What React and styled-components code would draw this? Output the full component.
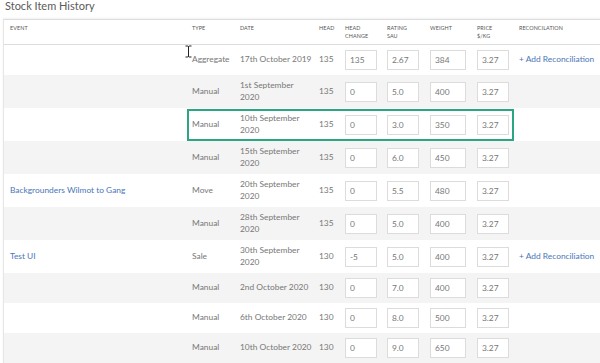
import React from "react";
import styled, { createGlobalStyle } from "styled-components";

const GlobalStyle = createGlobalStyle`
  html, body {
    margin: 0;
    padding: 0;
    background: #ffffff;
    overflow: hidden;
  }
  body {
    font-family: "Lato", "Open Sans", sans-serif;
  }
`;

const StyledPage = styled.div`
  width: 600px;
  height: 363px;
  overflow: hidden;
  position: relative;
`;

const StyledTitle = styled.h2`
  margin: 0;
  padding: 0 0 0 5px;
  height: 19px;
  font-size: 11px;
  font-weight: 400;
  line-height: 12px;
  color: #5a5a5a;
`;

const StyledPanel = styled.div`
  margin-left: 3px;
  width: 640px;
  border-top: 1px solid #ddd;
  border-left: 1px solid #e6e6e6;
  box-shadow: 0 -1px 2px rgba(0, 0, 0, 0.06);
`;

const StyledTable = styled.table`
  border-collapse: collapse;
  table-layout: fixed;
  width: 640px;
`;

const StyledHead = styled.th`
  text-align: left;
  vertical-align: top;
  font-size: 5.4px;
  font-weight: 400;
  letter-spacing: 0.1px;
  line-height: 8px;
  color: #555;
  text-transform: uppercase;
  padding: 4px 0 0 ${(p) => (p.$first ? "6px" : "0")};
  height: 20px;
  border-bottom: 1px solid #dcdcdc;
`;

const StyledRow = styled.tr`
  background: ${(p) => (p.$shaded ? "#f4f4f4" : "#ffffff")};
`;

const StyledCell = styled.td`
  position: relative;
  padding: 5px 0 5px ${(p) => (p.$first ? "6px" : "0")};
  font-size: 8.4px;
  font-weight: 400;
  line-height: 11.5px;
  color: #777;
  vertical-align: middle;
`;

const StyledDate = styled.div`
  width: 73px;
`;

const StyledLink = styled.a`
  color: #4a76b8;
  text-decoration: none;
  cursor: pointer;
`;

const StyledInput = styled.input`
  box-sizing: border-box;
  width: ${(p) => p.$w}px;
  height: 20px;
  border: 1px solid #dcdcdc;
  background: #fff;
  padding: 0 0 0 4px;
  font-family: inherit;
  font-weight: 400;
  font-size: 8.4px;
  color: #777;
  display: block;
`;

const StyledHighlight = styled.div`
  position: absolute;
  left: -5px;
  top: 1px;
  width: 327px;
  height: 32px;
  box-sizing: border-box;
  border: 2px solid #2ba680;
  pointer-events: none;
`;

const StyledCursor = styled.svg`
  position: absolute;
  left: 184px;
  top: 45px;
`;

const rows = [
  { event: "", type: "Aggregate", date: "17th October 2019", head: 135, hc: "135", sau: "2.67", wt: "384", price: "3.27", rec: true },
  { event: "", type: "Manual", date: "1st September 2020", head: 135, hc: "0", sau: "5.0", wt: "400", price: "3.27" },
  { event: "", type: "Manual", date: "10th September 2020", head: 135, hc: "0", sau: "3.0", wt: "350", price: "3.27", hl: true },
  { event: "", type: "Manual", date: "15th September 2020", head: 135, hc: "0", sau: "6.0", wt: "450", price: "3.27" },
  { event: "Backgrounders Wilmot to Gang", type: "Move", date: "20th September 2020", head: 135, hc: "0", sau: "5.5", wt: "480", price: "3.27" },
  { event: "", type: "Manual", date: "28th September 2020", head: 135, hc: "0", sau: "5.0", wt: "400", price: "3.27" },
  { event: "Test UI", type: "Sale", date: "30th September 2020", head: 130, hc: "-5", sau: "5.0", wt: "400", price: "3.27", rec: true },
  { event: "", type: "Manual", date: "2nd October 2020", head: 130, hc: "0", sau: "7.0", wt: "400", price: "3.27" },
  { event: "", type: "Manual", date: "6th October 2020", head: 130, hc: "0", sau: "8.0", wt: "500", price: "3.27" },
  { event: "", type: "Manual", date: "10th October 2020", head: 130, hc: "0", sau: "9.0", wt: "650", price: "3.27" },
];

const App = () => {
  return (
    <>
      <GlobalStyle />
      <StyledPage>
        <StyledTitle>Stock Item History</StyledTitle>
        <StyledPanel>
          <StyledTable>
            <colgroup>
              <col style={{ width: 188 }} />
              <col style={{ width: 48 }} />
              <col style={{ width: 79 }} />
              <col style={{ width: 26 }} />
              <col style={{ width: 42 }} />
              <col style={{ width: 43 }} />
              <col style={{ width: 47 }} />
              <col style={{ width: 42 }} />
              <col style={{ width: 125 }} />
            </colgroup>
            <thead>
              <tr>
                <StyledHead $first>Event</StyledHead>
                <StyledHead>Type</StyledHead>
                <StyledHead>Date</StyledHead>
                <StyledHead>Head</StyledHead>
                <StyledHead>Head<br />Change</StyledHead>
                <StyledHead>Rating<br />SAU</StyledHead>
                <StyledHead>Weight</StyledHead>
                <StyledHead>Price<br />$/KG</StyledHead>
                <StyledHead>Reconcilation</StyledHead>
              </tr>
            </thead>
            <tbody>
              {rows.map((r, i) => (
                <StyledRow key={i} $shaded={i % 2 === 1}>
                  <StyledCell $first>
                    {r.event && <StyledLink>{r.event}</StyledLink>}
                  </StyledCell>
                  <StyledCell>
                    {r.type}
                    {r.hl && <StyledHighlight />}
                  </StyledCell>
                  <StyledCell>
                    <StyledDate>{r.date}</StyledDate>
                  </StyledCell>
                  <StyledCell>{r.head}</StyledCell>
                  <StyledCell>
                    <StyledInput $w={32} defaultValue={r.hc} />
                  </StyledCell>
                  <StyledCell>
                    <StyledInput $w={32} defaultValue={r.sau} />
                  </StyledCell>
                  <StyledCell>
                    <StyledInput $w={36} defaultValue={r.wt} />
                  </StyledCell>
                  <StyledCell>
                    <StyledInput $w={32} defaultValue={r.price} />
                  </StyledCell>
                  <StyledCell>
                    {r.rec && <StyledLink>+ Add Reconciliation</StyledLink>}
                  </StyledCell>
                </StyledRow>
              ))}
            </tbody>
          </StyledTable>
        </StyledPanel>
        <StyledCursor width="9" height="13" viewBox="0 0 9 13">
          <path
            d="M1.5 1 H3.5 Q4.5 1 4.5 2 V11 Q4.5 12 3.5 12 H1.5 M7.5 1 H5.5 Q4.5 1 4.5 2 M7.5 12 H5.5 Q4.5 12 4.5 11"
            fill="none"
            stroke="#222"
            strokeWidth="1"
          />
        </StyledCursor>
      </StyledPage>
    </>
  );
};

export default App;
